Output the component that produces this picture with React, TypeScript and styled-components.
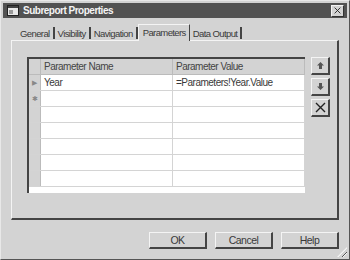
import React, { ReactElement } from 'react';
import styled, { createGlobalStyle } from 'styled-components';

const GlobalStyle = createGlobalStyle`
  html, body {
    margin: 0;
    padding: 0;
    background: #d3d3d3;
  }
  body {
    font-family: 'Liberation Sans', Arial, sans-serif;
    font-size: 10px;
    color: #3a3a3a;
  }
`;

type TabType = { label: string; active?: boolean };

const tabs: TabType[] = [
  { label: 'General' },
  { label: 'Visibility' },
  { label: 'Navigation' },
  { label: 'Parameters', active: true },
  { label: 'Data Output' },
];

const rows: { name: string; value: string; marker?: string }[] = [
  { name: 'Year', value: '=Parameters!Year.Value', marker: '▶' },
  { name: '', value: '', marker: '✱' },
  { name: '', value: '' },
  { name: '', value: '' },
  { name: '', value: '' },
  { name: '', value: '' },
  { name: '', value: '' },
];

// 창 아이콘
const WindowIcon = (): ReactElement => (
  <svg width="12" height="11" viewBox="0 0 12 11">
    <rect x="0.5" y="0.5" width="11" height="10" fill="#e8e8e8" stroke="#222" />
    <rect x="1" y="1" width="10" height="2" fill="#444" />
    <rect x="2" y="5" width="4" height="4" fill="#9a9a9a" />
  </svg>
);

const ArrowIcon = ({ down }: { down?: boolean }): ReactElement => (
  <svg width="7" height="7" viewBox="0 0 7 7" style={down ? { transform: 'rotate(180deg)' } : undefined}>
    <path d="M3.5 0 L7 3.5 L5 3.5 L5 7 L2 7 L2 3.5 L0 3.5 Z" fill="#555" />
  </svg>
);

const DeleteIcon = (): ReactElement => (
  <svg width="11" height="11" viewBox="0 0 11 11">
    <path d="M1 1 L10 10 M10 1 L1 10" stroke="#222" strokeWidth="1.4" />
  </svg>
);

const App = (): ReactElement => (
  <>
    <GlobalStyle />
    <Window>
      <TitleBar>
        <WindowIcon />
        <Title>Subreport Properties</Title>
        <CloseButton>
          <DeleteIcon />
        </CloseButton>
      </TitleBar>

      <TabStrip>
        {tabs.map((tab) => (
          <Tab key={tab.label} active={tab.active}>
            {tab.label}
          </Tab>
        ))}
      </TabStrip>

      <Panel>
        <Grid>
          <HeaderRow>
            <Selector />
            <HeaderCell>Parameter Name</HeaderCell>
            <HeaderCell>Parameter Value</HeaderCell>
          </HeaderRow>
          {rows.map((row, i) => (
            // eslint-disable-next-line react/no-array-index-key
            <Row key={i}>
              <Selector>{row.marker}</Selector>
              <Cell>{row.name}</Cell>
              <Cell>{row.value}</Cell>
            </Row>
          ))}
        </Grid>

        <SideButtons>
          <SmallButton>
            <ArrowIcon />
          </SmallButton>
          <SmallButton>
            <ArrowIcon down />
          </SmallButton>
          <SmallButton>
            <DeleteIcon />
          </SmallButton>
        </SideButtons>
      </Panel>

      <Footer>
        <DialogButton>OK</DialogButton>
        <DialogButton>Cancel</DialogButton>
        <DialogButton>Help</DialogButton>
      </Footer>
      <SizeGrip />
    </Window>
  </>
);

// 대화상자 style
const Window = styled.div`
  width: 350px;
  height: 260px;
  box-sizing: border-box;
  position: relative;
  display: flex;
  flex-direction: column;
  padding: 2px;
  background: #d3d3d3;
  border-left: 1px solid #e8e8e8;
  border-top: 1px solid #e8e8e8;
  border-right: 1px solid #555;
  border-bottom: 1px solid #555;
  overflow: hidden;
`;

const TitleBar = styled.div`
  height: 15px;
  display: flex;
  align-items: center;
  gap: 4px;
  padding: 0 3px 0 4px;
  background: #525252;
`;

const Title = styled.span`
  flex: 1;
  color: #f4f4f4;
  font-weight: bold;
  font-size: 10px;
  letter-spacing: -0.5px;
`;

const CloseButton = styled.div`
  width: 11px;
  height: 10px;
  display: flex;
  align-items: center;
  justify-content: center;
  background: #d3d3d3;
  border-left: 1px solid #f4f4f4;
  border-top: 1px solid #f4f4f4;
  border-right: 1px solid #333;
  border-bottom: 1px solid #333;
  svg {
    width: 7px;
    height: 7px;
  }
`;

const TabStrip = styled.div`
  display: flex;
  align-items: flex-end;
  height: 15px;
  margin: 7px 0 0 14px;
`;

const Tab = styled.div<{ active?: boolean }>`
  height: ${({ active }) => (active ? '15px' : '12px')};
  display: flex;
  align-items: center;
  padding: ${({ active }) => (active ? '0 3px 1px 4px' : '0 3px 0 3px')};
  margin-bottom: ${({ active }) => (active ? '-1px' : '1px')};
  border-left: ${({ active }) => (active ? '1px solid #f4f4f4' : 'none')};
  border-top: ${({ active }) => (active ? '1px solid #f4f4f4' : 'none')};
  border-right: ${({ active }) => (active ? '1px solid #444' : '2px solid #444')};
  background: ${({ active }) => (active ? '#d3d3d3' : 'transparent')};
  color: #3a3a3a;
  font-size: 9.5px;
  letter-spacing: -0.6px;
  position: relative;
  z-index: 1;
`;

const Panel = styled.div`
  height: 180px;
  box-sizing: border-box;
  margin: 0 8px;
  display: flex;
  gap: 6px;
  padding: 16px 7px 0 15px;
  border-left: 1px solid #f4f4f4;
  border-top: 1px solid #f4f4f4;
  border-right: 2px solid #444;
  border-bottom: 2px solid #444;
`;

const Grid = styled.div`
  width: 279px;
  height: 136px;
  box-sizing: border-box;
  overflow: hidden;
  background: #fff;
  border-left: 2px solid #444;
  border-top: 2px solid #444;
`;

const HeaderRow = styled.div`
  display: grid;
  grid-template-columns: 12px 132px 1fr;
  height: 15px;
  background: #d3d3d3;
  border-bottom: 1px solid #bbb;
`;

const Row = styled.div`
  display: grid;
  grid-template-columns: 12px 132px 1fr;
  height: 16px;
  box-sizing: border-box;
  border-bottom: 1px solid #d4d4d4;
`;

const Selector = styled.div`
  background: #d3d3d3;
  border-right: 1px solid #bbb;
  display: flex;
  align-items: center;
  justify-content: center;
  font-size: 7px;
  color: #888;
`;

const HeaderCell = styled.div`
  padding: 0 3px;
  display: flex;
  align-items: center;
  border-right: 1px solid #bbb;
  color: #444;
  letter-spacing: -0.5px;
`;

const Cell = styled.div`
  padding: 0 3px;
  display: flex;
  align-items: center;
  border-right: 1px solid #d4d4d4;
  color: #3a3a3a;
  letter-spacing: -0.5px;
`;

const SideButtons = styled.div`
  display: flex;
  flex-direction: column;
  gap: 3px;
`;

const SmallButton = styled.div`
  width: 19px;
  height: 18px;
  box-sizing: border-box;
  display: flex;
  align-items: center;
  justify-content: center;
  background: #d3d3d3;
  border-left: 1px solid #f4f4f4;
  border-top: 1px solid #f4f4f4;
  border-right: 2px solid #444;
  border-bottom: 2px solid #444;
`;

const Footer = styled.div`
  display: flex;
  justify-content: flex-end;
  gap: 8px;
  margin: 12px 8px 0 0;
`;

const DialogButton = styled.div`
  width: 58px;
  height: 17px;
  box-sizing: border-box;
  display: flex;
  align-items: center;
  justify-content: center;
  background: #d3d3d3;
  border-left: 1px solid #f4f4f4;
  border-top: 1px solid #f4f4f4;
  border-right: 2px solid #444;
  border-bottom: 2px solid #444;
  color: #3a3a3a;
  font-size: 10.5px;
  letter-spacing: -0.5px;
`;

const SizeGrip = styled.div`
  position: absolute;
  right: 2px;
  bottom: 2px;
  width: 10px;
  height: 10px;
  background: repeating-linear-gradient(
    135deg,
    transparent 0 2px,
    #555 2px 3px,
    #f4f4f4 3px 4px
  );
  clip-path: polygon(100% 0, 100% 100%, 0 100%);
`;

export default App;
